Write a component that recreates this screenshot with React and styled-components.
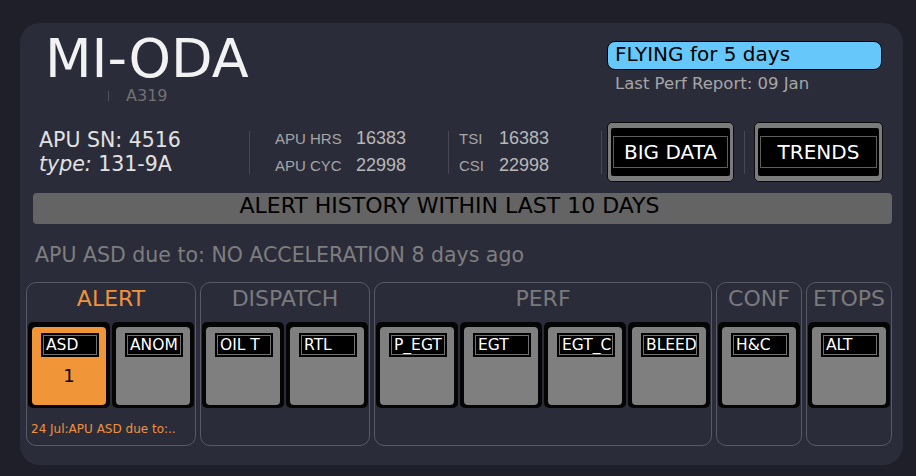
import React from 'react'
import styled, { createGlobalStyle } from 'styled-components'

const GlobalStyle = createGlobalStyle`
    html, body {
        margin: 0;
        background: #1e1f29;
    }
    body {
        font-family: "DejaVu Sans", Verdana, sans-serif;
    }
`

const Card = styled.div`
    margin: 23px 13px 11px 20px;
    padding: 9px 10px 19px 6px;
    background: #2b2c3a;
    border-radius: 20px;
`

// header: registration + status
const HeaderRow = styled.div`
    display: flex;
    align-items: flex-start;
`
const TitleBlock = styled.div`
    margin-left: 19px;
`
const Title = styled.div`
    font-size: 54px;
    line-height: 50px;
    padding: 2px 0;
    color: #f2f2f2;
`
const SubLine = styled.div`
    display: flex;
    align-items: center;
    margin: 1px 0 0 63px;
    height: 18px;
`
const Sep = styled.span`
    width: 1px;
    height: 10px;
    background: #50515c;
`
const AcType = styled.span`
    margin-left: 17px;
    font-size: 16px;
    line-height: 18px;
    color: #717171;
`
const Status = styled.div`
    margin: 9px 11px 0 auto;
    width: 275px;
`
const Pill = styled.div`
    border: 1px solid #000;
    border-radius: 8px;
    background: #66c8fa;
    color: #000;
    font-size: 20px;
    line-height: 24px;
    padding: 0 0 3px 7px;
`
const LastReport = styled.div`
    margin-top: 4px;
    padding-left: 8px;
    font-size: 16.5px;
    line-height: 20px;
    color: #a6a6a6;
`

// info row
const InfoRow = styled.div`
    display: flex;
    align-items: center;
    height: 60px;
    margin: 17px 0 0 13px;
`
const SnBlock = styled.div`
    width: 210px;
    font-size: 20.5px;
    line-height: 24px;
    color: #e2e2e2;
    em { font-style: italic; }
`
const Divider = styled.div`
    width: 1px;
    height: 43px;
    background: #474856;
    margin-left: ${p => p.gap || 0}px;
`
const Stats = styled.div`
    display: grid;
    grid-template-columns: ${p => p.labelW}px auto;
    align-items: baseline;
    width: ${p => p.w}px;
    margin-left: ${p => p.ml}px;
    font-family: "Liberation Sans", Arial, sans-serif;
    line-height: 27px;
`
const StatLabel = styled.span`
    font-size: 15px;
    color: #a5a5a5;
`
const StatValue = styled.span`
    font-size: 18px;
    color: #b8b8b8;
`
const BigButton = styled.div`
    box-sizing: border-box;
    width: ${p => p.w}px;
    height: 60px;
    margin-left: ${p => p.ml}px;
    padding: 5px 3px 4px;
    border: 1px solid #0d0d0d;
    border-radius: 5px;
    background: #7b7b7b;
`
const ButtonFace = styled.div`
    background: #000;
    border-radius: 2px;
    padding: 8px 2px 8px;
`
const ButtonText = styled.div`
    border: 1px solid #5e5e5e;
    text-align: center;
    color: #fff;
    font-size: 20px;
    line-height: 30px;
`

// alert history
const HistoryBar = styled.div`
    margin: 11px 1px 0 7px;
    height: 31px;
    box-sizing: border-box;
    padding: 0 26px 5px 0;
    background: #646464;
    border-radius: 4px;
    text-align: center;
    color: #000;
    font-size: 22px;
    line-height: 26px;
`
const DueLine = styled.div`
    margin: 19px 0 0 9px;
    font-size: 20.5px;
    line-height: 24px;
    color: #7e7e7e;
`

// groups of tiles
const Groups = styled.div`
    display: flex;
    gap: 4px;
    margin-top: 15px;
`
const Group = styled.div`
    box-sizing: border-box;
    height: 164px;
    padding: 4px 1px 0;
    border: 1px solid #595a65;
    border-radius: 10px;
`
const GroupTitle = styled.div`
    text-align: center;
    font-size: 22px;
    line-height: 24px;
    color: ${p => (p.active ? '#f0923a' : '#7a7a7a')};
`
const Tiles = styled.div`
    display: flex;
    justify-content: center;
    gap: 2px;
    margin-top: 11px;
`
const Tile = styled.div`
    box-sizing: border-box;
    width: 82px;
    height: 86px;
    padding: 5px 4px 3px 4px;
    background: #050505;
    border-radius: 5px;
`
const TileFace = styled.div`
    height: 100%;
    box-sizing: border-box;
    padding-top: 6px;
    border-radius: 4px;
    background: ${p => (p.alert ? '#f19539' : '#7f7f7f')};
`
const TileLabel = styled.div`
    width: 58px;
    box-sizing: border-box;
    margin-left: 9px;
    padding: 2px;
    background: #000;
`
const TileLabelText = styled.div`
    border: 1px solid #727272;
    overflow: hidden;
    white-space: nowrap;
    padding-left: 2px;
    color: #fff;
    font-size: 15.5px;
    line-height: 18px;
`
const Count = styled.div`
    margin-top: 8px;
    text-align: center;
    color: #000;
    font-size: 18px;
    line-height: 22px;
`
const Note = styled.div`
    margin: 13px 0 0 3px;
    color: #f0923a;
    font-size: 12px;
    line-height: 16px;
    white-space: nowrap;
`

const groups = [
    {
        title: 'ALERT',
        active: true,
        tiles: [{ label: 'ASD', count: 1, alert: true }, { label: 'ANOM' }],
        note: '24 Jul:APU ASD due to:..',
    },
    { title: 'DISPATCH', tiles: [{ label: 'OIL T' }, { label: 'RTL' }] },
    {
        title: 'PERF',
        tiles: [{ label: 'P_EGT' }, { label: 'EGT' }, { label: 'EGT_C' }, { label: 'BLEED' }],
    },
    { title: 'CONF', tiles: [{ label: 'H&C' }] },
    { title: 'ETOPS', tiles: [{ label: 'ALT' }] },
]

const App = () => {
    return (
        <>
            <GlobalStyle />
            <Card>
                <HeaderRow>
                    <TitleBlock>
                        <Title>MI-ODA</Title>
                        <SubLine>
                            <Sep />
                            <AcType>A319</AcType>
                        </SubLine>
                    </TitleBlock>
                    <Status>
                        <Pill>FLYING for 5 days</Pill>
                        <LastReport>Last Perf Report: 09 Jan</LastReport>
                    </Status>
                </HeaderRow>

                <InfoRow>
                    <SnBlock>
                        <div>APU SN: 4516</div>
                        <div><em>type:</em> 131-9A</div>
                    </SnBlock>
                    <Divider />
                    <Stats labelW={81} w={173} ml={25}>
                        <StatLabel>APU HRS</StatLabel>
                        <StatValue>16383</StatValue>
                        <StatLabel>APU CYC</StatLabel>
                        <StatValue>22998</StatValue>
                    </Stats>
                    <Divider />
                    <Stats labelW={40} w={142} ml={10}>
                        <StatLabel>TSI</StatLabel>
                        <StatValue>16383</StatValue>
                        <StatLabel>CSI</StatLabel>
                        <StatValue>22998</StatValue>
                    </Stats>
                    <Divider />
                    <BigButton w={127} ml={5}>
                        <ButtonFace><ButtonText>BIG DATA</ButtonText></ButtonFace>
                    </BigButton>
                    <Divider gap={10} />
                    <BigButton w={129} ml={9}>
                        <ButtonFace><ButtonText>TRENDS</ButtonText></ButtonFace>
                    </BigButton>
                </InfoRow>

                <HistoryBar>ALERT HISTORY WITHIN LAST 10 DAYS</HistoryBar>
                <DueLine>APU ASD due to: NO ACCELERATION 8 days ago</DueLine>

                <Groups>
                    {groups.map(g => (
                        <Group key={g.title}>
                            <GroupTitle active={g.active}>{g.title}</GroupTitle>
                            <Tiles>
                                {g.tiles.map(t => (
                                    <Tile key={t.label}>
                                        <TileFace alert={t.alert}>
                                            <TileLabel>
                                                <TileLabelText>{t.label}</TileLabelText>
                                            </TileLabel>
                                            {t.count && <Count>{t.count}</Count>}
                                        </TileFace>
                                    </Tile>
                                ))}
                            </Tiles>
                            {g.note && <Note>{g.note}</Note>}
                        </Group>
                    ))}
                </Groups>
            </Card>
        </>
    )
}

export default App
